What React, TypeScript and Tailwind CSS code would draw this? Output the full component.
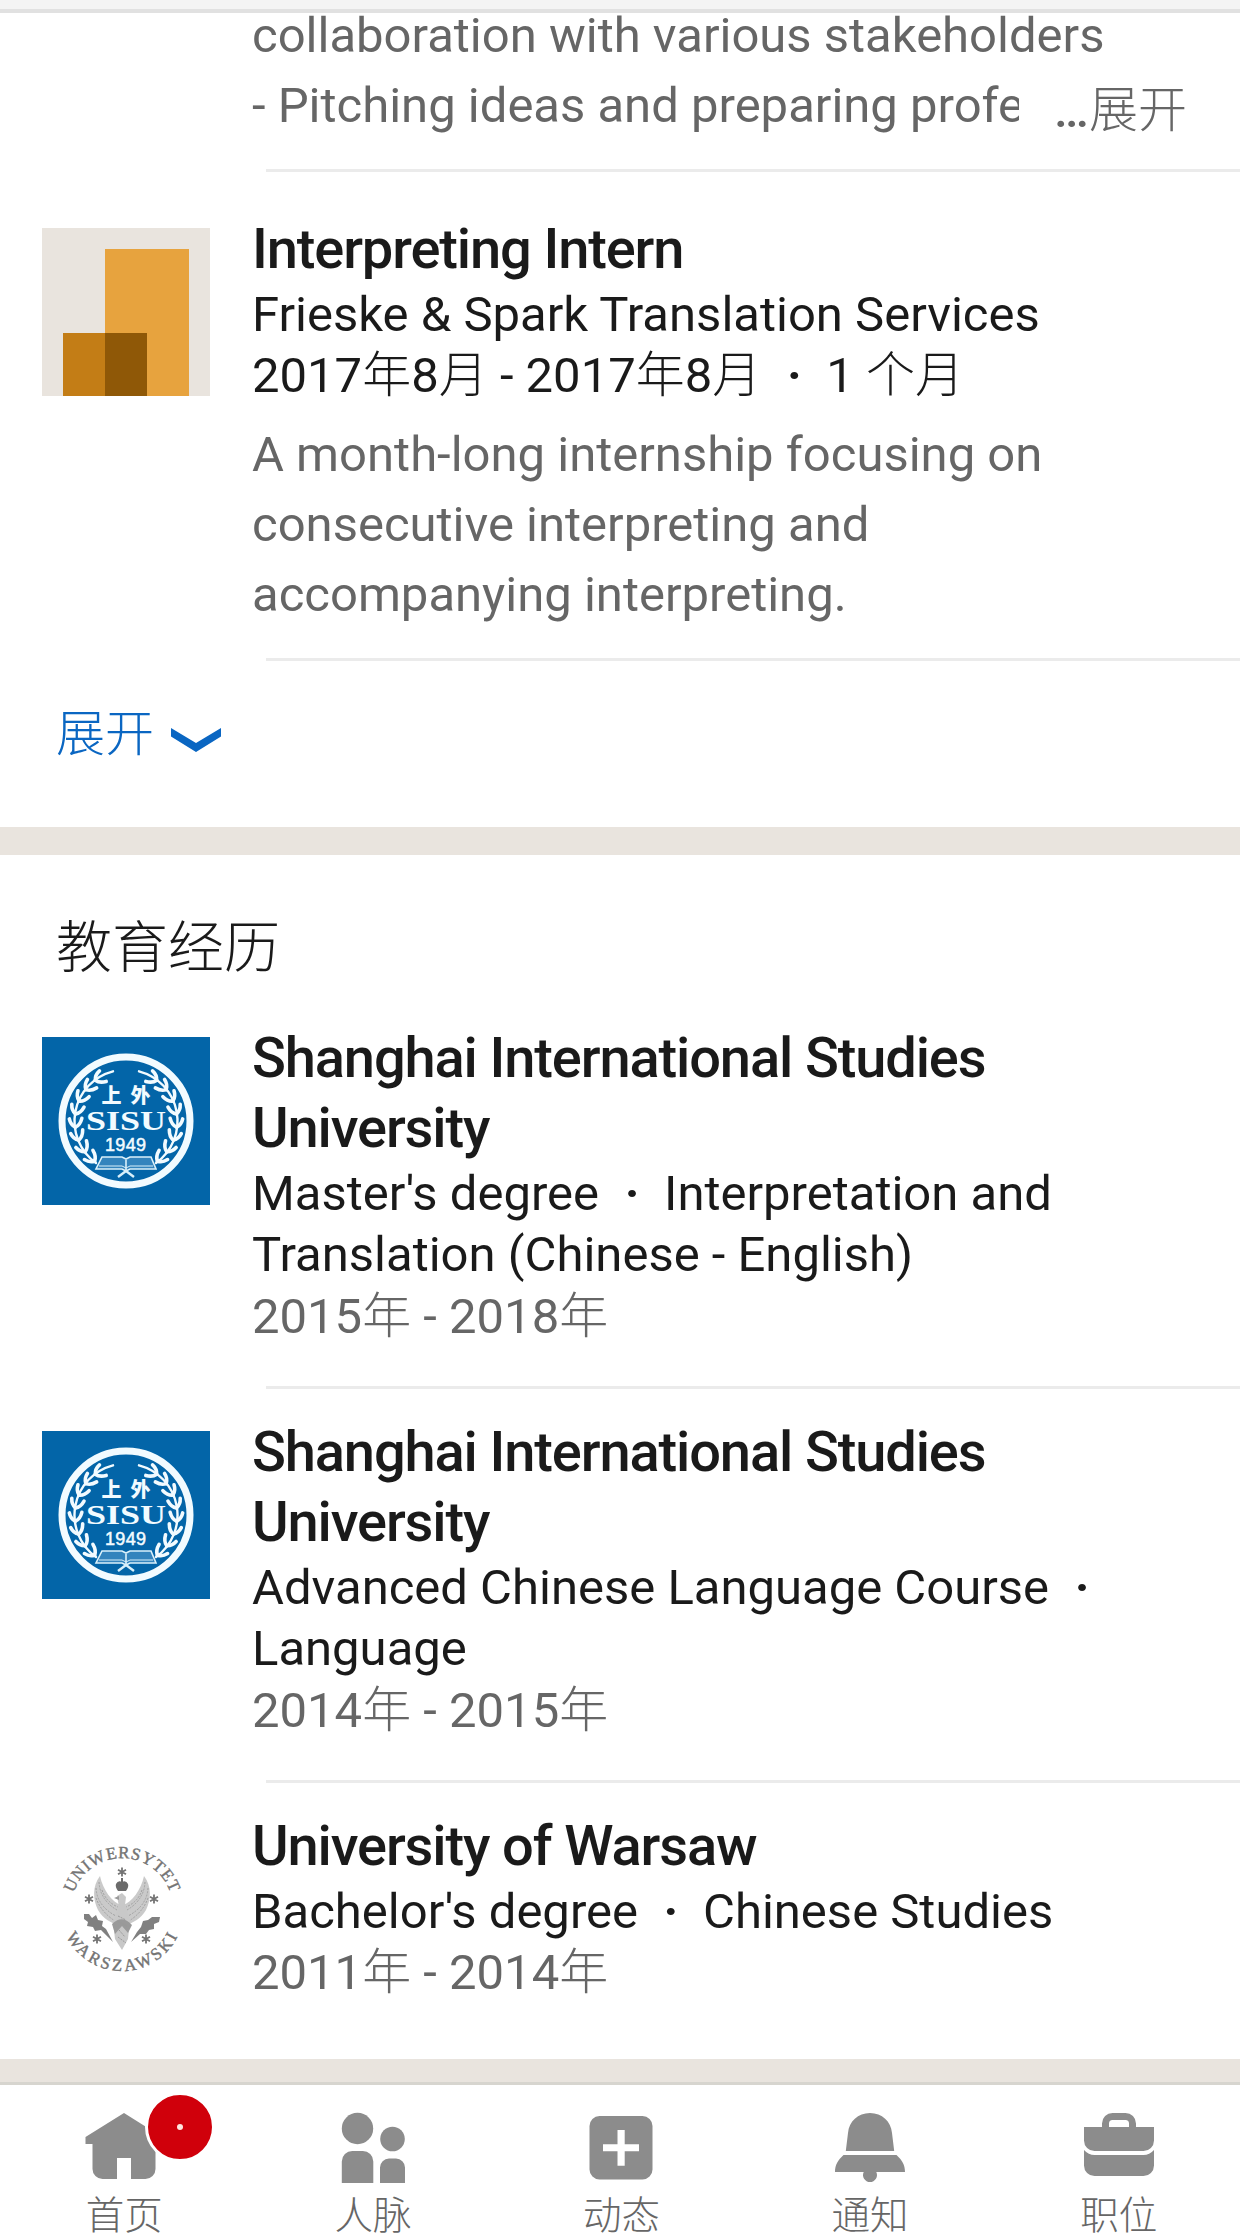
import type { ReactNode } from "react";

const Zh = ({ children }: { children: ReactNode }) => (
  <span className="font-['Noto_Sans_CJK_SC',sans-serif] leading-none font-light">{children}</span>
);

const Dot = () => <span className="inline-block w-[65px] pl-px text-center leading-none font-bold">·</span>;

const Title = ({ children }: { children: ReactNode }) => (
  <h3 className="text-[56px] leading-[70px] font-medium tracking-[-1.12px] text-[#1a1a1a]">{children}</h3>
);

const Line = ({ children, muted }: { children: ReactNode; muted?: boolean }) => (
  <p
    className={
      muted
        ? "h-[61.25px] text-[49px] leading-[61.25px] text-[#666]"
        : "h-[61.25px] text-[49px] leading-[61.25px] text-[#1a1a1a]"
    }
  >
    {children}
  </p>
);

const Divider = () => <div className="ml-[266px] h-[3px] shrink-0 bg-[#ebebeb]" />;

const CompanyLogo = () => (
  <svg viewBox="0 0 168 168" className="size-[168px]">
    <rect width="168" height="168" fill="#e9e4de" />
    <rect x="63" y="21" width="84" height="147" fill="#e7a33e" />
    <rect x="21" y="105" width="84" height="63" fill="#c37d16" />
    <rect x="63" y="105" width="42" height="63" fill="#8f5807" />
  </svg>
);

const leaves = [0, 1, 2, 3, 4, 5, 6, 7];

const Branch = () => (
  <g fill="none" stroke="#f2fbff" strokeLinecap="round">
    <path d="M71 34.300A51.500 51.500 0 0 0 54 126" strokeWidth="2.4" />
    {leaves.map((i) => (
      <g key={i} transform={`rotate(${128 + i * 15} 84 84) translate(135 84)`} strokeWidth="3.6">
        <path d="M0 0Q4.500 3 5 9" />
        <path d="M0 0Q-5 1.500 -7.500 8" />
      </g>
    ))}
  </g>
);

const SisuLogo = () => (
  <svg viewBox="0 0 168 168" className="size-[168px]">
    <rect width="168" height="168" fill="#0365a8" />
    <circle cx="84" cy="84" r="64" fill="none" stroke="#f2fbff" strokeWidth="7" />
    <Branch />
    <g transform="translate(168 0) scale(-1 1)">
      <Branch />
    </g>
    <g fill="#f2fbff" textAnchor="middle">
      <text x="69.500" y="65.500" fontSize="20" fontWeight="900" fontFamily="Noto Sans CJK SC">上</text>
      <text x="98.500" y="65.500" fontSize="20" fontWeight="900" fontFamily="Noto Sans CJK SC">外</text>
      <text
        x="84"
        y="93"
        fontSize="28"
        fontWeight="700"
        fontFamily="Liberation Serif"
        textLength="80"
        lengthAdjust="spacingAndGlyphs"
      >
        SISU
      </text>
      <text x="83.500" y="114" fontSize="18" fontFamily="Liberation Sans" textLength="41" stroke="#f2fbff" strokeWidth=".5">1949</text>
    </g>
    <g fill="none" stroke="#d9f0fa" strokeWidth="1.6">
      <path d="M60 120H80L84 122L88 120H109L114 132H88L84 134L80 132H54ZM84 122V133" fill="#3384bd" />
      <path d="M57 129H80L84 131L88 129H111" strokeWidth="1" />
      <path d="M76 140L84 134L92 140" strokeWidth="2.4" />
    </g>
  </svg>
);

const stars = [
  [80, 40],
  [47, 67],
  [112, 67],
  [55, 107],
  [104, 107],
];

const Wing = () => (
  <g>
    <path d="M58 44C50 54 51 68 56 78C61 87 69 90 76 94L79 73C70 70 61 58 58 44Z" fill="#cacaca" />
    <path
      d="M57 50Q58 68 75 78M54 56Q55 74 74 84M54 66Q59 80 73 89M60 58Q64 70 76 75"
      fill="none"
      stroke="#a0a0a0"
      strokeWidth="1"
      strokeDasharray="2 1.3"
    />
  </g>
);

const WarsawLogo = () => (
  <svg viewBox="0 0 168 168" className="size-[168px]">
    <defs>
      <path id="arc-top" d="M31.600 68A51 51 0 0 1 128.400 68" />
      <path id="arc-bottom" d="M24.200 111A62 62 0 0 0 135.800 111" />
    </defs>
    <g fill="#747474" fontFamily="Liberation Serif" fontSize="17" stroke="#747474" strokeWidth=".4">
      <text>
        <textPath href="#arc-top" textLength="127">UNIWERSYTET</textPath>
      </text>
      <text>
        <textPath href="#arc-bottom" textLength="138">WARSZAWSKI</textPath>
      </text>
    </g>
    <g transform="translate(0 7)">
      <Wing />
      <g transform="translate(160 0) scale(-1 1)">
        <Wing />
      </g>
      <path d="M75 64L80 61L84 65L83 73L88 88L86 107L80 118L73 107L71 90L77 75Z" fill="#c8c8c8" />
      <path d="M77 64L72 66L77 68ZM70 92Q80 82 90 93L86 101L80 94L73 102Z" fill="#9a9a9a" />
      <path d="M76 84L84 88M75 89L85 94M77 98L83 105M76 105L84 111" stroke="#999" strokeDasharray="2 1" />
      <path d="M74 52Q76 48 80 50Q84 48 86 52Q87 55 84 59H76Q73 55 74 52ZM79 46H81V50H79Z" fill="#6b6b6b" />
      <g stroke="#737373" strokeWidth="1.8">
        {stars.map(([x, y]) => (
          <path
            key={`${x}-${y}`}
            d={`M${x} ${y - 4.5}V${y + 4.5}M${x - 4} ${y - 2.3}L${x + 4} ${y + 2.3}M${x - 4} ${y + 2.3}L${x + 4} ${y - 2.3}`}
          />
        ))}
      </g>
      <path d="M42 82L47 82L50 86L54 83L56 88L61 89L60 94L64 97L71 110L59 98L53 99L51 95L45 94L46 90L42 87Z" fill="#808080" />
      <path d="M118 85L110 85L106 88L101 89L99 95L95 100L89 110L98 102L104 102L107 98L112 97L112 92L117 90Z" fill="#808080" />
    </g>
  </svg>
);

const Item = ({ logo, children }: { logo: ReactNode; children: ReactNode }) => (
  <div className="flex">
    <div className="mt-3.5 mr-[42px] ml-[42px] size-[168px] shrink-0">{logo}</div>
    <div className="whitespace-nowrap">{children}</div>
  </div>
);

const HomeIcon = () => (
  <path d="M42 7L77 29V38H73.500V63a10 10 0 0 1-10 10H49V52H35V73H20.500a10 10 0 0 1-10-10V38H3.500V31Z" />
);

const PeopleIcon = () => (
  <g>
    <circle cx="26.500" cy="22.500" r="15.700" />
    <circle cx="61.500" cy="33" r="12.300" />
    <path d="M10.800 77V55.500a10.500 10.500 0 0 1 10.500-10.500h10.500a10.500 10.500 0 0 1 10.500 10.500V77ZM49 77V61.500a9 9 0 0 1 9-9h7a9 9 0 0 1 9 9V77Z" />
  </g>
);

const PlusIcon = () => (
  <path
    fillRule="evenodd"
    d="M20.500 10h43a10 10 0 0 1 10 10v43.500a10 10 0 0 1-10 10h-43a10 10 0 0 1-10-10V20a10 10 0 0 1 10-10ZM38.500 24v14.300H24v7H38.500V59.700h7.200V45.300H60v-7H45.700V24Z"
  />
);

const BellIcon = () => (
  <path d="M42 7C54 7 63 15.500 64 27L66.200 45H17.800L20 27C21 15.500 30 7 42 7ZM15.500 49H68.500C74 54 77 59 77 66H48.300A7 7 0 1 1 35.700 66H7C7 59 10 54 15.500 49Z" />
);

const JobsIcon = () => (
  <path
    fillRule="evenodd"
    d="M7 21H25V17.500A10.500 10.500 0 0 1 35.500 7H48.500A10.500 10.500 0 0 1 59 17.500V21H77V34.500A10.500 10.500 0 0 1 66.500 45H17.500A10.500 10.500 0 0 1 7 34.500ZM32 21H52V17.500A3.500 3.500 0 0 0 48.500 14H35.500A3.500 3.500 0 0 0 32 17.500ZM7 44Q11.500 49 17.500 49H66.500Q72.500 49 77 44V59.500A10.500 10.500 0 0 1 66.500 70H17.500A10.500 10.500 0 0 1 7 59.500Z"
  />
);

const tabs = [
  { label: "首页", icon: <HomeIcon />, badge: true },
  { label: "人脉", icon: <PeopleIcon /> },
  { label: "动态", icon: <PlusIcon /> },
  { label: "通知", icon: <BellIcon /> },
  { label: "职位", icon: <JobsIcon /> },
];

export default function App() {
  return (
    <div className="flex h-[2235px] w-[1240px] flex-col overflow-hidden bg-white font-['Roboto',sans-serif]">
      <header className="h-[13px] shrink-0 border-t-[9px] border-b-4 border-t-[#f4f4f4] border-b-[#e1e1e1]" />

      <section className="h-[814px] shrink-0">
        <div className="-mt-3 h-[168px] pl-[252px] text-[49px] leading-[70px] whitespace-nowrap text-[#666]">
          <p>collaboration with various stakeholders</p>
          <div className="flex">
            <p className="w-[767px] overflow-hidden">- Pitching ideas and preparing profe</p>
            <p className="ml-[35px] h-[70px] pt-[5px]">
              <span className="inline-block w-[35px] font-medium">…</span>
              <Zh>展开</Zh>
            </p>
          </div>
        </div>
        <Divider />
        <div className="pt-[42px]">
          <Item logo={<CompanyLogo />}>
            <Title>Interpreting Intern</Title>
            <Line>Frieske &amp; Spark Translation Services</Line>
            <Line>
              2017<Zh>年</Zh>8<Zh>月</Zh> - 2017<Zh>年</Zh>8<Zh>月</Zh>
              <Dot />1 <Zh>个月</Zh>
            </Line>
            <p className="mt-[13.5px] mb-7 text-[49px] leading-[70px] text-[#666]">
              A month-long internship focusing on
              <br />
              consecutive interpreting and
              <br />
              accompanying interpreting.
            </p>
          </Item>
        </div>
        <Divider />
        <button className="mt-[33px] ml-[56px] flex h-[70px] items-center text-[49px] text-[#0a66c2]">
          <Zh>展开</Zh>
          <svg viewBox="0 0 50 24" className="mt-[22px] ml-[17px] h-6 w-[50px]" fill="#0a66c2">
            <path d="M0 0L25 15L50 0V8.500L25 24L0 8.500Z" />
          </svg>
        </button>
      </section>

      <div className="h-7 shrink-0 bg-[#e9e4de]" />

      <section className="h-[1204px] shrink-0">
        <h2 className="mt-[53px] mb-[45px] ml-[56px] flex h-[70px] items-center text-[56px] text-[#1a1a1a]">
          <Zh>教育经历</Zh>
        </h2>
        <Item logo={<SisuLogo />}>
          <Title>
            Shanghai International Studies
            <br />
            University
          </Title>
          <Line>
            Master's degree
            <Dot />
            Interpretation and
          </Line>
          <Line>Translation (Chinese - English)</Line>
          <Line muted>
            2015<Zh>年</Zh> - 2018<Zh>年</Zh>
          </Line>
        </Item>
        <div className="pt-[39.25px] pb-7">
          <Divider />
        </div>
        <Item logo={<SisuLogo />}>
          <Title>
            Shanghai International Studies
            <br />
            University
          </Title>
          <Line>
            Advanced Chinese Language Course
            <Dot />
          </Line>
          <Line>Language</Line>
          <Line muted>
            2014<Zh>年</Zh> - 2015<Zh>年</Zh>
          </Line>
        </Item>
        <div className="pt-[39.25px] pb-7">
          <Divider />
        </div>
        <Item logo={<WarsawLogo />}>
          <Title>University of Warsaw</Title>
          <Line>
            Bachelor's degree
            <Dot />
            Chinese Studies
          </Line>
          <Line muted>
            2011<Zh>年</Zh> - 2014<Zh>年</Zh>
          </Line>
        </Item>
      </section>

      <div className="h-[26px] shrink-0 border-b-3 border-[#d7d5cf] bg-[#e9e4de]" />

      <nav className="flex w-[1243px] shrink-0 pt-[21px]">
        {tabs.map((tab) => (
          <div key={tab.label} className="relative flex flex-1 flex-col items-center">
            <svg viewBox="0 0 84 84" className="size-[84px]" fill="#8c8c8c">
              {tab.icon}
            </svg>
            {tab.badge && (
              <span className="absolute -top-[14px] left-[145px] flex size-[70px] items-center justify-center rounded-full border-3 border-white bg-[#d0000b]">
                <span className="size-1.5 rounded-full bg-[#ffe6e0]" />
              </span>
            )}
            <span className="mt-[3px] h-[38.500px] text-[38.500px] leading-none text-[#666]">
              <Zh>{tab.label}</Zh>
            </span>
          </div>
        ))}
      </nav>
    </div>
  );
}
